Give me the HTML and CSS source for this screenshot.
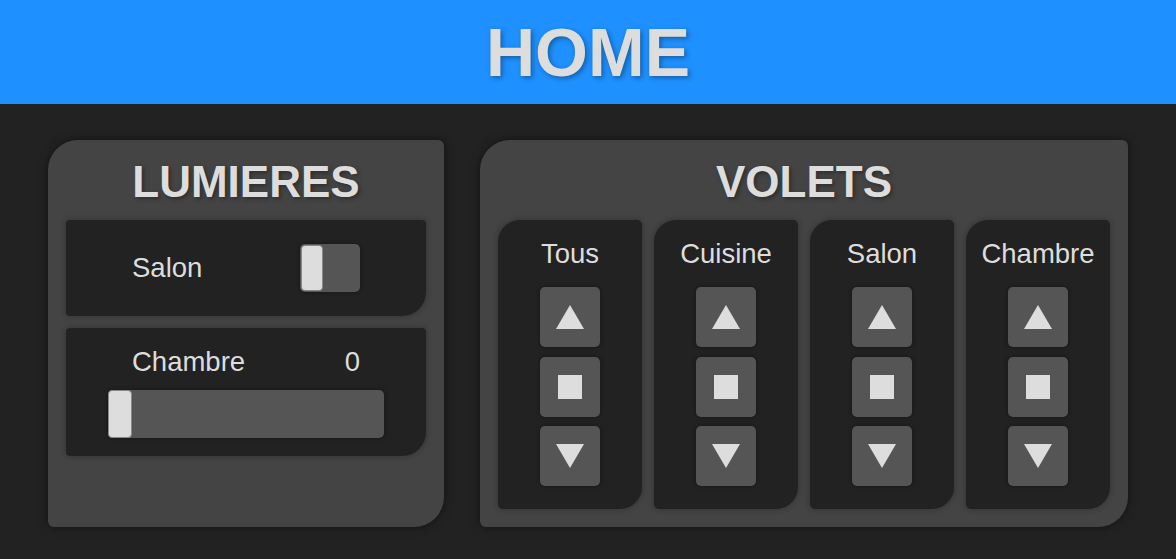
FILE: index.html
```html
<!DOCTYPE html>
<html>

<head>
    <title>Home</title>
    <link rel="stylesheet" href="styles.css">
</head>

<body>
    <header>
        <h1>HOME</h1>
    </header>
    <main>
        <section class="panel lumieres">
            <h2>LUMIERES</h2>
            <div class="lampe">
                <div class="ligne">
                    <span>Salon</span>
                    <label class="switch">
                        <input type="checkbox">
                        <span class="knob"></span>
                    </label>
                </div>
            </div>
            <div class="lampe">
                <div class="ligne">
                    <span>Chambre</span>
                    <span id="valeur-chambre">0</span>
                </div>
                <input class="slider" type="range" min="0" max="100" value="0">
            </div>
        </section>
        <section class="panel volets">
            <h2>VOLETS</h2>
            <div class="liste">
                <div class="volet">
                    <h3>Tous</h3>
                    <button class="up"><span></span></button>
                    <button class="stop"><span></span></button>
                    <button class="down"><span></span></button>
                </div>
                <div class="volet">
                    <h3>Cuisine</h3>
                    <button class="up"><span></span></button>
                    <button class="stop"><span></span></button>
                    <button class="down"><span></span></button>
                </div>
                <div class="volet">
                    <h3>Salon</h3>
                    <button class="up"><span></span></button>
                    <button class="stop"><span></span></button>
                    <button class="down"><span></span></button>
                </div>
                <div class="volet">
                    <h3>Chambre</h3>
                    <button class="up"><span></span></button>
                    <button class="stop"><span></span></button>
                    <button class="down"><span></span></button>
                </div>
            </div>
        </section>
    </main>
</body>

</html>
```

FILE: styles.css
```css
body {
    margin: 0;
    font-family: "Liberation Sans", Arial, sans-serif;
    background-color: #222222;
    color: #dddddd;
}

header {
    height: 104px;
    display: flex;
    justify-content: center;
    align-items: center;
    background-color: #1e90ff;
}

header h1 {
    margin: 0;
    font-size: 68px;
    color: #dddddd;
    text-shadow: 2px 2px 5px rgba(0, 0, 0, 0.35);
}

main {
    display: flex;
    gap: 36px;
    padding: 36px 48px 32px;
}

.panel {
    display: flex;
    flex-direction: column;
    background-color: #444444;
    border-radius: 30px 6px 30px 6px;
    padding: 0 18px 18px;
    box-shadow: 0 0 10px rgba(0, 0, 0, 0.5);
}

.lumieres {
    width: 360px;
}

.volets {
    width: 612px;
}

.panel h2 {
    margin: 0;
    height: 80px;
    line-height: 84px;
    text-align: center;
    font-size: 44px;
    text-shadow: 2px 2px 4px rgba(0, 0, 0, 0.35);
}

.lampe {
    background-color: #222222;
    border-radius: 4px 4px 24px 4px;
    box-shadow: 0 0 6px rgba(0, 0, 0, 0.3);
    margin-bottom: 12px;
    display: flex;
    flex-direction: column;
    align-items: center;
}

.lampe:first-of-type {
    height: 96px;
    justify-content: center;
}

.lampe:last-of-type {
    padding: 18px 0 18px;
}

.ligne {
    width: 228px;
    display: flex;
    justify-content: space-between;
    align-items: center;
    font-size: 27.5px;
    line-height: 32px;
}

.switch {
    position: relative;
    width: 60px;
    height: 48px;
    background-color: #555555;
    border-radius: 5px;
    box-shadow: 0 0 4px rgba(0, 0, 0, 0.4);
}

.switch input {
    display: none;
}

.knob {
    position: absolute;
    left: 1px;
    top: 1px;
    width: 20px;
    height: 44px;
    background-color: #dddddd;
    border: 1px solid #888888;
    border-radius: 4px;
}

.slider {
    -webkit-appearance: none;
    appearance: none;
    width: 276px;
    height: 48px;
    margin: 12px 0 0;
    background-color: #555555;
    border-radius: 5px;
    box-shadow: 0 0 4px rgba(0, 0, 0, 0.4);
}

.slider::-webkit-slider-thumb {
    -webkit-appearance: none;
    width: 24px;
    height: 48px;
    background-color: #dddddd;
    border: 1px solid #888888;
    border-radius: 4px;
    box-sizing: border-box;
}

.liste {
    display: flex;
    gap: 12px;
    flex: 1;
}

.volet {
    width: 144px;
    background-color: #222222;
    border-radius: 22px 5px 22px 5px;
    box-shadow: 0 0 6px rgba(0, 0, 0, 0.3);
    display: flex;
    flex-direction: column;
    align-items: center;
    padding: 16px 0 13px;
}

.volet h3 {
    margin: 0 0 15px;
    font-size: 27.5px;
    font-weight: normal;
    line-height: 36px;
}

button {
    width: 60px;
    height: 60px;
    margin-bottom: 9.5px;
    border: 0;
    border-radius: 5px;
    background-color: #555555;
    box-shadow: 0 0 4px rgba(0, 0, 0, 0.4);
    display: flex;
    justify-content: center;
    align-items: center;
    padding: 0;
}

.up span {
    width: 0;
    height: 0;
    border-left: 14px solid transparent;
    border-right: 14px solid transparent;
    border-bottom: 24px solid #dddddd;
}

.down span {
    width: 0;
    height: 0;
    border-left: 14px solid transparent;
    border-right: 14px solid transparent;
    border-top: 24px solid #dddddd;
}

.stop span {
    width: 24px;
    height: 24px;
    background-color: #dddddd;
}
```
